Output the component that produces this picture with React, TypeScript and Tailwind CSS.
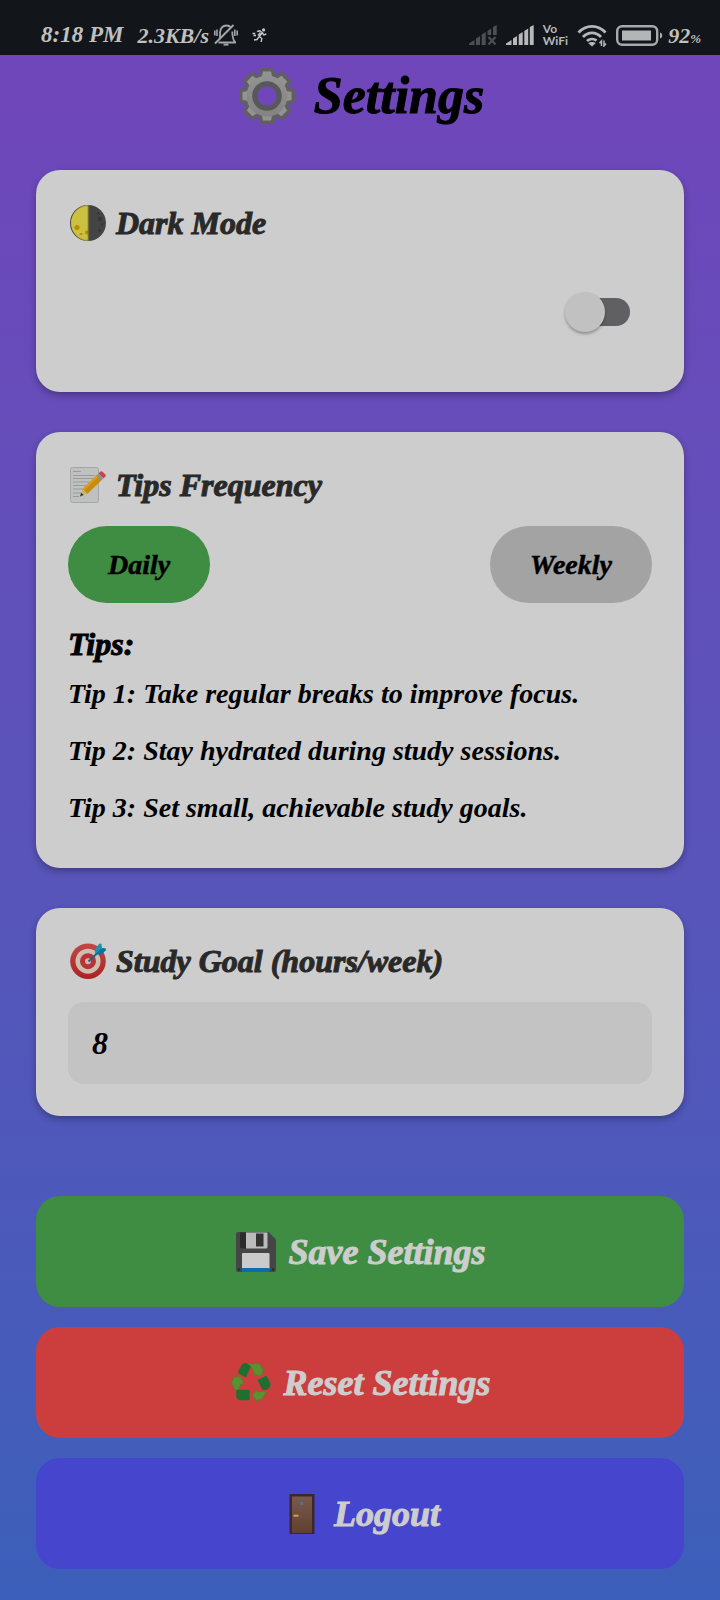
import { useState, type ReactNode } from "react";

function BellOff() {
  return (
    <svg viewBox="0 0 24 22" className="h-[22px] w-6" fill="none" stroke="#a3a5a7" strokeWidth="1.8" aria-hidden="true">
      <path d="M4.500 18.500h17.500M6 14V8.500C6.500 4 9 1.500 12.500 1.500c2 0 3.300.6 4.500 1.800M18.300 7.500c0 5 .2 8 3 11" />
      <path d="M1 19.500 19.500 1" strokeWidth="2" />
      <path d="M.8 6.500v5M23.200 6.500v5M3 5.500v6.500M20.800 5.500v6.500" strokeWidth="1.600" />
      <path d="M9.500 20.600h5" strokeWidth="2" />
    </svg>
  );
}

function Runner() {
  return (
    <svg viewBox="0 0 16 15" className="h-[15px] w-4" fill="none" stroke="#c8c8c8" strokeWidth="1.400" aria-hidden="true">
      <circle cx="11.600" cy="1.900" r=".9" />
      <path d="M5 3.500 7.800 2.800 10.500 4.800 7.300 8.500l2.500 2-.6 3.500M10.500 4.800l1.300 2.200 2.500-1M7 8.800 5 11.500l-3 .5M.5 5.500h2.800M1.500 7.500h2.500M8.500 4.500 6 7.500" />
    </svg>
  );
}

function Signal({ off = false }: { off?: boolean }) {
  return (
    <svg viewBox="0 0 28 20" className="h-5 w-7" fill={off ? "#4d5053" : "#b7b8b9"} aria-hidden="true">
      <path d="M0 20v-1.500L5.500 15v5zM7 13.500 11 11v9H7zM12.700 9.500l4-2.500v13h-4z" />
      {off ? (
        <>
          <path d="m18.500 6 3.700-2.500V10h-3.700zM24 2l3.700-2v10H24z" />
          <path d="m19.500 12 7 7.500m0-7.500-7 7.500" stroke="#4d5053" strokeWidth="2.200" />
        </>
      ) : (
        <path d="m18.300 6 3.900-2.500V20h-3.900zM23.800 2l3.900-2v20h-3.900z" />
      )}
    </svg>
  );
}

function Wifi() {
  return (
    <svg viewBox="0 0 30 23" className="h-[23px] w-[30px]" fill="none" stroke="#b7b8b9" strokeWidth="2.800" aria-hidden="true">
      <path d="M1.500 8.500c7.500-8.300 19.500-8.300 27 0M6 13c5.200-5.600 12.800-5.600 18 0M10 17c2.500-2.300 6.500-2.700 9.500-.5" />
      <path d="M11.300 19.300c2-1.900 5.400-1.900 7.400 0L15 22.500z" fill="#b7b8b9" stroke="none" />
      <path d="M24.500 22v-5l-2 2.300M27 16.500v5.500l2-2.500" strokeWidth="1.500" />
    </svg>
  );
}

function Battery() {
  return (
    <svg viewBox="0 0 47 21" className="h-[21px] w-[47px]" aria-hidden="true">
      <rect x="1.200" y="1.200" width="40" height="18.600" rx="5" fill="none" stroke="#a9aaab" strokeWidth="2.400" />
      <rect x="6" y="5.500" width="29" height="10" fill="#b4b5b6" />
      <path d="M44 7.500c3 .6 3 5.400 0 6z" fill="#a9aaab" />
    </svg>
  );
}

function Gear() {
  const teeth = [0, 45, 90, 135, 180, 225, 270, 315];
  return (
    <svg viewBox="0 0 58 58" className="size-[58px]" aria-hidden="true">
      <defs>
        <linearGradient id="gear" x1="0" y1="0" x2="0" y2="58" gradientUnits="userSpaceOnUse">
          <stop stopColor="#959595" />
          <stop offset="1" stopColor="#808080" />
        </linearGradient>
      </defs>
      <g fill="#606060">
        {teeth.map((a) => (
          <path key={a} d="M19.500 14 21.500 3Q22 .8 24.500.8h9Q36 .8 36.500 3L38.500 14z" transform={`rotate(${a} 29 29)`} />
        ))}
      </g>
      <circle cx="29" cy="29" r="16.500" fill="none" stroke="#606060" strokeWidth="13" />
      <g fill="url(#gear)">
        {teeth.map((a) => (
          <path key={a} d="M23 14 25 4.500h8L35 14z" transform={`rotate(${a} 29 29)`} />
        ))}
      </g>
      <circle cx="29" cy="29" r="17" fill="none" stroke="url(#gear)" strokeWidth="7" />
      <circle cx="29" cy="29" r="12.300" fill="none" stroke="#585858" strokeWidth="5" />
    </svg>
  );
}

function Moon() {
  return (
    <svg viewBox="0 0 36 36" className="size-9" aria-hidden="true">
      <circle cx="18" cy="18" r="18" fill="#444" />
      <path d="M19 0A18 18 0 0 0 19 36z" fill="#a7a02c" />
      <path d="M18 1.200A16.800 16.800 0 0 0 18 34.800z" fill="#ccc13f" />
      <circle cx="7" cy="22.500" r="2.500" fill="#b68b05" />
      <circle cx="17" cy="27.500" r="2" fill="#b68b05" />
      <ellipse cx="11" cy="29" rx="1.600" ry="1" fill="#b68b05" />
      <path d="M18.500 0v36" stroke="#6e6b3c" strokeWidth="1.500" />
      <g fill="#363636">
        <circle cx="30" cy="14" r="2.300" />
        <circle cx="32" cy="19.500" r="1.200" />
        <circle cx="29.500" cy="25.500" r="1.500" />
        <circle cx="28" cy="8.500" r="1.200" />
      </g>
    </svg>
  );
}

function Memo() {
  return (
    <svg viewBox="0 0 36 36" className="size-9" aria-hidden="true">
      <rect x=".5" y=".5" width="28" height="35" rx="2" fill="#bfc0c0" stroke="#a5a5a5" />
      <path
        d="M3 4.500h8M3 8.500h22M3 11.500h20M3 15h17M3 18.500h14M3 22h11M3 26h8M3 29.500h6"
        stroke="#999a9c"
        strokeWidth="1.100"
      />
      <path d="m10 29.500 2.500-7.500 5 4.700z" fill="#cdb36b" />
      <path d="m10 29.500 1.200-3.800 2.500 2.300z" fill="#333" />
      <path d="M12.500 22 27 8l5 4.800-14.500 13.900z" fill="#c98a10" />
      <path d="m12.500 22 14.500-14 1.700 1.600-14.500 14z" fill="#d9a012" />
      <path d="m26.500 8.500 2-2 5 4.800-2 2z" fill="#8e9294" />
      <path d="m28.500 6.500 1.600-1.700q1.200-1 2.500 0l2.700 2.600q1 1.200 0 2.300l-1.800 1.600z" fill="#c5474a" />
    </svg>
  );
}

function Target() {
  return (
    <svg viewBox="0 0 36 36" className="size-9" aria-hidden="true">
      <defs>
        <linearGradient id="ring" x1="0" y1="0" x2="0" y2="1">
          <stop stopColor="#c24848" />
          <stop offset="1" stopColor="#ad2222" />
        </linearGradient>
      </defs>
      <circle cx="18" cy="18.200" r="17.800" fill="url(#ring)" />
      <circle cx="18" cy="18.200" r="12.500" fill="#cdbeb2" />
      <circle cx="18" cy="18.200" r="8" fill="#b83434" />
      <circle cx="18" cy="18.200" r="3" fill="#cdb8b0" />
      <path d="M18.500 18.500 28 9.500" stroke="#285d80" strokeWidth="1.800" />
      <path d="m25 11.500.3-6L29.500.5l2 .3.500 4.200z" fill="#1797a8" />
      <path d="m25 11.500 7-6.500 3.500.3.500 2-4.500 4.200z" fill="#176da6" />
    </svg>
  );
}

function Floppy() {
  return (
    <svg viewBox="0 0 40 40" className="size-10" aria-hidden="true">
      <path d="M2 0h30.500L40 7.500V38q0 2-2 2H2q-2 0-2-2V2Q0 0 2 0z" fill="#454545" />
      <path d="M4 .5h6v16H6q-2 0-2-2z" fill="#2b2b2b" />
      <path d="M10 .5h21.500V15q0 1.500-1.500 1.500H10z" fill="#bcbcbc" />
      <path d="M20 1.500h7.500v13H20z" fill="#333" />
      <path d="M6 22q0-1 1-1h25.500q1 0 1 1v15H6z" fill="#cbcbcb" />
      <path d="M6 36h27.500v4H6z" fill="#0d6cac" />
      <path d="M2 37.500h2M36 37.500h2" stroke="#222" strokeWidth="1.500" />
    </svg>
  );
}

function Recycle() {
  return (
    <svg viewBox="0 0 40 40" className="size-10" strokeLinejoin="round" aria-hidden="true">
      <g fill="#5b922f" stroke="#4b8230" strokeWidth=".8">
        <path d="M13 .7h14.500q2 .8 2.500 2.500l1.200 3 2-.7-3.200 7.500L22 11.500l2-1.300-4-6.500z" />
        <path d="M3 15.500.500 14.200 9.500 13.800l3.300 7.700-2.800-.5-3.500 7H5L1 21.500Q0 20 1 18z" />
        <path d="m21.300 32.500 5.200-6v2.500l9-.8-3.500 6.300q-1.200 2-3.200 2.200h-2.300l.3 3z" />
      </g>
      <g fill="#1f7030" stroke="#1f7030" strokeWidth="1.500">
        <path d="m7.500 9.500 4-7.500q1.500-1.700 4-1l3.500 2.500-4.500 10z" />
        <path d="m27.500 17.500 7.500-4 3.500 6.500q.8 2.500-.7 4.300l-1.800 1.700-4 .3z" />
        <path d="M18 27.500v9H8.500q-2-.5-2.500-3v-6z" />
      </g>
    </svg>
  );
}

function Door() {
  return (
    <svg viewBox="0 0 40 40" className="size-10" aria-hidden="true">
      <defs>
        <linearGradient id="door" x1="0" y1="0" x2="0" y2="1">
          <stop stopColor="#79594f" />
          <stop offset="1" stopColor="#60402f" />
        </linearGradient>
      </defs>
      <path d="M7.500 0h25v40h-25z" fill="#3d2728" />
      <path d="M10 2.500h20V39H10z" fill="url(#door)" />
      <circle cx="19.700" cy="9.500" r="1.700" fill="#557383" />
      <path d="M11.500 21.700h5" stroke="#c5a44c" strokeWidth="2" />
    </svg>
  );
}

const tips = [
  "Take regular breaks to improve focus.",
  "Stay hydrated during study sessions.",
  "Set small, achievable study goals.",
];

const heavy = "[-webkit-text-stroke:1px_currentColor]";
const card = "rounded-3xl bg-[#cdcdcd] p-8 shadow-[0_3px_7px_rgba(0,0,0,0.3)]";
const cardTitle = `flex items-center gap-[10px] pl-[2px] text-[32px] leading-[42px] text-[#292929] ${heavy}`;

function ActionButton({ icon, color, onClick, children }: { icon: ReactNode; color: string; onClick?: () => void; children: ReactNode }) {
  return (
    <button
      type="button"
      onClick={onClick}
      className={`flex h-[111px] items-center justify-center gap-3 rounded-3xl pl-[2px] text-[36px] text-[#cdcdcd] ${heavy} ${color}`}
    >
      {icon}
      {children}
    </button>
  );
}

export default function App() {
  const [dark, setDark] = useState(false);
  const [frequency, setFrequency] = useState("Daily");
  const [goal, setGoal] = useState("8");

  const reset = () => {
    setDark(false);
    setFrequency("Daily");
    setGoal("8");
  };

  return (
    <div className="flex min-h-screen flex-col bg-linear-to-b from-[#7145ba] to-[#3b5fba] font-['Liberation_Serif',serif] font-bold italic">
      <header className="flex h-[55px] items-end justify-between bg-[#12161a] pb-[6px] pl-[41px] pr-[19px] text-[#c0c0c0]">
        <div className="flex h-7 items-center">
          <span className="text-[23px]">8:18 PM</span>
          <span className="ml-[14px] mr-[5px] text-[22px]">2.3KB/s</span>
          <BellOff />
          <span className="ml-[14px]">
            <Runner />
          </span>
        </div>
        <div className="flex h-7 items-center gap-[9px]">
          <Signal off />
          <Signal />
          <span className="flex flex-col font-['Lato',sans-serif] text-[12px] leading-3 not-italic text-[#b7b8b9]">
            <span>Vo</span>
            <span>WiFi</span>
          </span>
          <Wifi />
          <Battery />
          <span className="-ml-1 text-[22px]">
            92<span className="text-[13px]">%</span>
          </span>
        </div>
      </header>

      <main className="flex flex-col px-9 pb-[31px]">
        <h1 className={`flex h-[82px] items-center justify-center gap-[18px] pl-[2px] text-[52px] ${heavy}`}>
          <Gear />
          Settings
        </h1>

        <div className="mt-[33px] flex flex-col gap-10">
          <section className={card}>
            <h2 className={cardTitle}>
              <Moon />
              <label htmlFor="dark-mode">Dark Mode</label>
            </h2>
            <div className="mt-5 flex h-24 items-center justify-end pr-[22px]">
              <input
                id="dark-mode"
                type="checkbox"
                role="switch"
                checked={dark}
                onChange={(e) => setDark(e.target.checked)}
                className="flex h-7 w-[58px] appearance-none items-center rounded-full bg-[#606062] before:-ml-[7px] before:size-10 before:shrink-0 before:rounded-full before:bg-[#c1c1c1] before:shadow-[0_2px_3px_rgba(0,0,0,0.3)] checked:bg-[#3f8d42] checked:before:ml-6"
              />
            </div>
          </section>

          <section className={card}>
            <h2 className={cardTitle}>
              <Memo />
              Tips Frequency
            </h2>
            <div className="mt-5 flex justify-between">
              {["Daily", "Weekly"].map((option) => (
                <button
                  key={option}
                  type="button"
                  aria-pressed={frequency === option}
                  onClick={() => setFrequency(option)}
                  className={`h-[77px] rounded-full px-10 text-[28px] [-webkit-text-stroke:0.5px_currentColor] ${frequency === option ? "bg-[#3f8d42]" : "bg-[#a3a3a3]"}`}
                >
                  {option}
                </button>
              ))}
            </div>
            <h3 className={`mt-5 text-[32px] leading-[42px] ${heavy}`}>Tips:</h3>
            <ul>
              {tips.map((tip, i) => (
                <li key={tip} className="py-[10px] text-[28px] leading-[37px]">
                  Tip {i + 1}: {tip}
                </li>
              ))}
            </ul>
          </section>

          <section className={card}>
            <h2 className={cardTitle}>
              <Target />
              <label htmlFor="goal">Study Goal (hours/week)</label>
            </h2>
            <input
              id="goal"
              type="text"
              inputMode="numeric"
              value={goal}
              onChange={(e) => setGoal(e.target.value)}
              className="mt-5 h-[82px] w-full rounded-2xl bg-[#c3c3c3] px-6 text-[32px]"
            />
          </section>
        </div>

        <div className="mt-20 flex flex-col gap-5">
          <ActionButton icon={<Floppy />} color="bg-[#3f8d42]">
            Save Settings
          </ActionButton>
          <ActionButton icon={<Recycle />} color="bg-[#cc3e3e]" onClick={reset}>
            Reset Settings
          </ActionButton>
          <ActionButton icon={<Door />} color="bg-[#4545cd]">
            Logout
          </ActionButton>
        </div>
      </main>
    </div>
  );
}
